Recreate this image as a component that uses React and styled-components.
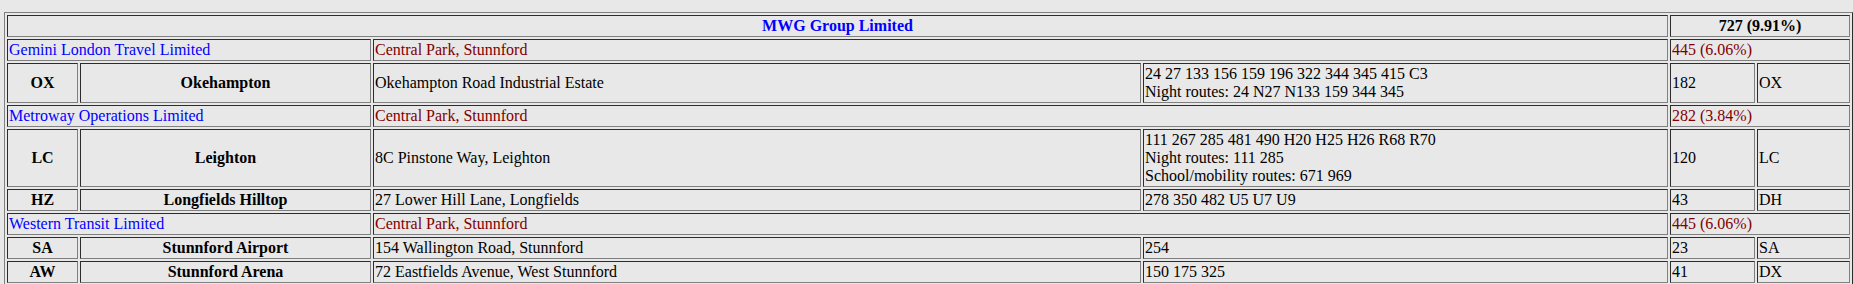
import React from "react";
import styled, { createGlobalStyle } from "styled-components";

const GlobalStyle = createGlobalStyle`
  html,
  body {
    margin: 0;
    background: #e8e8e8;
  }
  body {
    padding: 12px 0 0 4px;
    font-family: "Liberation Serif", "Times New Roman", serif;
    font-size: 16px;
    line-height: 18px;
    color: #000;
  }
`;

const Table = styled.table`
  box-sizing: border-box;
  width: 1849px;
  table-layout: fixed;
  border-collapse: separate;
  border-spacing: 2px;
  border: 1px outset grey;
`;

const Col = styled.col`
  width: ${(p) => p.$w}px;
`;

const Cell = styled.td`
  border: 1px inset grey;
  padding: 1px;
  vertical-align: middle;
  white-space: nowrap;
  overflow: hidden;
  text-align: ${(p) => (p.$center ? "center" : "left")};
  font-weight: ${(p) => (p.$bold ? "bold" : "normal")};
  color: ${(p) =>
    p.$tone === "blue" ? "#0000ff" : p.$tone === "red" ? "#800000" : "#000"};
`;

const widths = [71, 291, 768, 525, 85, 93];

const groups = [
  {
    name: "Gemini London Travel Limited",
    base: "Central Park, Stunnford",
    total: "445 (6.06%)",
    depots: [
      {
        code: "OX",
        name: "Okehampton",
        address: "Okehampton Road Industrial Estate",
        routes: [
          "24 27 133 156 159 196 322 344 345 415 C3",
          "Night routes: 24 N27 N133 159 344 345",
        ],
        count: "182",
        garage: "OX",
      },
    ],
  },
  {
    name: "Metroway Operations Limited",
    base: "Central Park, Stunnford",
    total: "282 (3.84%)",
    depots: [
      {
        code: "LC",
        name: "Leighton",
        address: "8C Pinstone Way, Leighton",
        routes: [
          "111 267 285 481 490 H20 H25 H26 R68 R70",
          "Night routes: 111 285",
          "School/mobility routes: 671 969",
        ],
        count: "120",
        garage: "LC",
      },
      {
        code: "HZ",
        name: "Longfields Hilltop",
        address: "27 Lower Hill Lane, Longfields",
        routes: ["278 350 482 U5 U7 U9"],
        count: "43",
        garage: "DH",
      },
    ],
  },
  {
    name: "Western Transit Limited",
    base: "Central Park, Stunnford",
    total: "445 (6.06%)",
    depots: [
      {
        code: "SA",
        name: "Stunnford Airport",
        address: "154 Wallington Road, Stunnford",
        routes: ["254"],
        count: "23",
        garage: "SA",
      },
      {
        code: "AW",
        name: "Stunnford Arena",
        address: "72 Eastfields Avenue, West Stunnford",
        routes: ["150 175 325"],
        count: "41",
        garage: "DX",
      },
    ],
  },
];

const Routes = ({ lines }) =>
  lines.map((line, i) => (
    <React.Fragment key={i}>
      {i > 0 && <br />}
      {line}
    </React.Fragment>
  ));

const App = () => {
  return (
    <>
      <GlobalStyle />
      <Table>
        <colgroup>
          {widths.map((w, i) => (
            <Col key={i} $w={w} />
          ))}
        </colgroup>
        <tbody>
          <tr>
            <Cell colSpan={4} $center $bold $tone="blue">
              MWG Group Limited
            </Cell>
            <Cell colSpan={2} $center $bold>
              727 (9.91%)
            </Cell>
          </tr>
          {groups.map((g) => (
            <React.Fragment key={g.name}>
              <tr>
                <Cell colSpan={2} $tone="blue">
                  {g.name}
                </Cell>
                <Cell colSpan={2} $tone="red">
                  {g.base}
                </Cell>
                <Cell colSpan={2} $tone="red">
                  {g.total}
                </Cell>
              </tr>
              {g.depots.map((d) => (
                <tr key={d.code}>
                  <Cell $center $bold>
                    {d.code}
                  </Cell>
                  <Cell $center $bold>
                    {d.name}
                  </Cell>
                  <Cell>{d.address}</Cell>
                  <Cell>
                    <Routes lines={d.routes} />
                  </Cell>
                  <Cell>{d.count}</Cell>
                  <Cell>{d.garage}</Cell>
                </tr>
              ))}
            </React.Fragment>
          ))}
        </tbody>
      </Table>
    </>
  );
};

export default App;
